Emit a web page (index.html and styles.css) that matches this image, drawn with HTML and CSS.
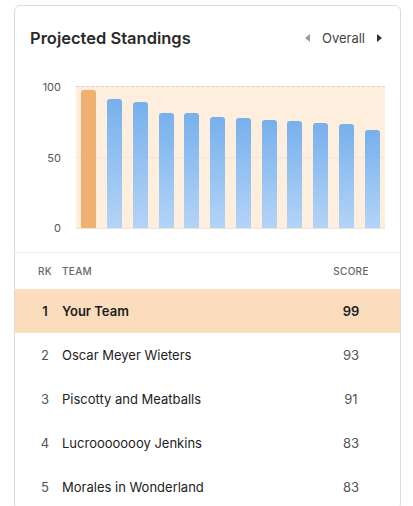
FILE: index.html
```html
<!DOCTYPE html>
<html lang="en">
<head>
  <meta charset="UTF-8" />
  <meta name="viewport" content="width=device-width, initial-scale=1.0"/>
  <title>Projected Standings</title>
  <link rel="stylesheet" href="styles.css">
</head>
<body>
  <div class="card">
    <div class="card-header">
      <h2>Projected Standings</h2>
      <div class="switcher">
        <span class="arrow left disabled"></span>
        <span class="switch-label">Overall</span>
        <span class="arrow right"></span>
      </div>
    </div>

    <div class="chart">
      <div class="y-axis">
        <span>100</span>
        <span>50</span>
        <span>0</span>
      </div>
      <div class="plot">
        <div class="slot"><div class="bar mine" style="height: 138px"></div></div>
        <div class="slot"><div class="bar" style="height: 129px"></div></div>
        <div class="slot"><div class="bar" style="height: 126px"></div></div>
        <div class="slot"><div class="bar" style="height: 115px"></div></div>
        <div class="slot"><div class="bar" style="height: 115px"></div></div>
        <div class="slot"><div class="bar" style="height: 111px"></div></div>
        <div class="slot"><div class="bar" style="height: 110px"></div></div>
        <div class="slot"><div class="bar" style="height: 108px"></div></div>
        <div class="slot"><div class="bar" style="height: 107px"></div></div>
        <div class="slot"><div class="bar" style="height: 105px"></div></div>
        <div class="slot"><div class="bar" style="height: 104px"></div></div>
        <div class="slot"><div class="bar" style="height: 98px"></div></div>
      </div>
    </div>

    <div class="standings">
      <div class="row head">
        <span class="rk">RK</span>
        <span class="team">TEAM</span>
        <span class="score">SCORE</span>
      </div>
      <div class="row me">
        <span class="rk">1</span>
        <span class="team">Your Team</span>
        <span class="score">99</span>
      </div>
      <div class="row">
        <span class="rk">2</span>
        <span class="team">Oscar Meyer Wieters</span>
        <span class="score">93</span>
      </div>
      <div class="row">
        <span class="rk">3</span>
        <span class="team">Piscotty and Meatballs</span>
        <span class="score">91</span>
      </div>
      <div class="row">
        <span class="rk">4</span>
        <span class="team">Lucroooooooy Jenkins</span>
        <span class="score">83</span>
      </div>
      <div class="row">
        <span class="rk">5</span>
        <span class="team">Morales in Wonderland</span>
        <span class="score">83</span>
      </div>
    </div>
  </div>
</body>
</html>
```

FILE: styles.css
```css
body {
  margin: 0;
  padding: 5px 0 0 14px;
  font-family: Inter, "Open Sans", sans-serif;
  background: #fff;
  color: #222;
}

.card {
  width: 385px;
  border: 1px solid #dcdcdc;
  border-radius: 6px;
  overflow: hidden;
}

.card-header {
  display: flex;
  justify-content: space-between;
  align-items: center;
  padding: 22px 18px 0 15px;
  height: 20px;
}

.card-header h2 {
  margin: 0;
  font-size: 16.5px;
  font-weight: 600;
  color: #2a2a2a;
  line-height: 20px;
}

.switcher {
  display: flex;
  align-items: center;
  gap: 12px;
  font-size: 13px;
  color: #444;
}

.arrow {
  width: 0;
  height: 0;
  border-top: 4px solid transparent;
  border-bottom: 4px solid transparent;
}

.arrow.left {
  border-right: 5px solid #333;
}

.arrow.right {
  border-left: 5px solid #333;
}

.arrow.disabled {
  border-right-color: #9a9a9a;
}

.chart {
  display: flex;
  height: 150px;
  margin-top: 38px;
  padding: 0 15px 0 0;
}

.y-axis {
  width: 46px;
  height: 141px;
  margin-top: 1px;
  display: flex;
  flex-direction: column;
  justify-content: space-between;
  align-items: flex-end;
  padding-right: 15px;
  font-size: 11px;
  color: #555;
}

.y-axis span {
  line-height: 12px;
  margin: -6px 0;
}

.plot {
  flex: 1;
  display: flex;
  align-items: flex-end;
  height: 141px;
  border-top: 1px dashed #d8d2ca;
  border-bottom: 1px solid #ece4da;
  background:
    linear-gradient(#f4e6d6, #f4e6d6) 0 70px / 100% 1px no-repeat,
    #fdeedd;
}

.slot {
  flex: 1;
  display: flex;
  justify-content: center;
}

.bar {
  width: 15px;
  border-radius: 3px 3px 0 0;
  background: linear-gradient(#77b0ec, #b4d4f7);
}

.bar.mine {
  background: #f0b070;
}

.standings {
  margin-top: 16px;
  border-top: 1px solid #ececec;
}

.row {
  display: flex;
  align-items: center;
  height: 44px;
  font-size: 13px;
  padding-right: 19px;
}

.row .rk {
  width: 30px;
  margin-left: 15px;
  text-align: center;
  color: #555;
}

.row .team {
  flex: 1;
  margin-left: 2px;
  color: #222;
}

.row .score {
  width: 60px;
  text-align: center;
  color: #555;
}

.row.head {
  height: 36px;
  font-size: 10px;
  font-weight: 500;
  letter-spacing: 0.3px;
}

.row.head span {
  color: #666;
}

.row.me {
  background: #fbdcbd;
  font-weight: 600;
}

.row.me .rk,
.row.me .team,
.row.me .score {
  color: #1e1e1e;
}
```
